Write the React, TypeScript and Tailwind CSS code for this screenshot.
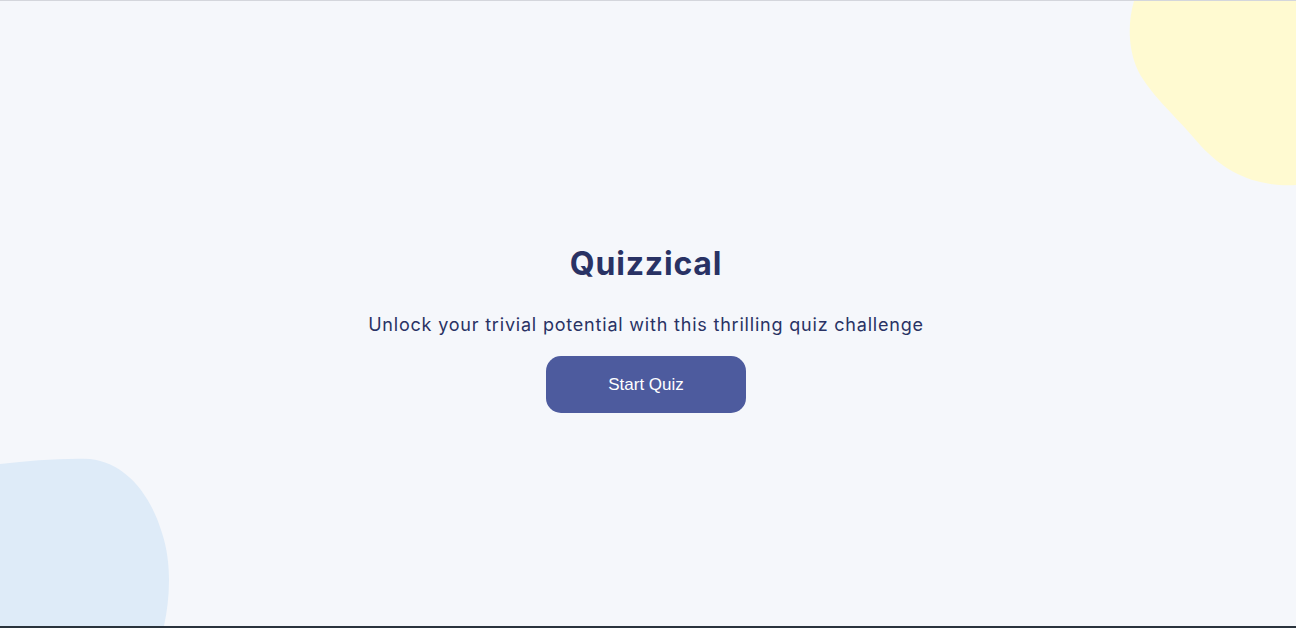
function YellowBlob() {
  return (
    <svg
      className="absolute top-0 right-0"
      width="170"
      height="190"
      viewBox="0 0 170 190"
      aria-hidden="true"
    >
      <path
        d="M8,0 C2,20 2,45 10,65 C20,90 50,115 75,145 C100,172 130,186 170,184 L170,0 Z"
        fill="#FFFAD1"
      />
    </svg>
  );
}

function BlueBlob() {
  return (
    <svg
      className="absolute left-0 bottom-0"
      width="175"
      height="188"
      viewBox="0 0 175 188"
      aria-hidden="true"
    >
      <path
        d="M0,26 L0,188 L164,188 C170,160 172,125 162,95 C150,55 125,25 90,21 C60,20 30,23 0,26 Z"
        fill="#DEEBF8"
      />
    </svg>
  );
}

export default function App() {
  return (
    <div className="h-[628px] w-full flex flex-col bg-[#F5F7FB]">
      <div className="h-px bg-[#d4d6dc]" />
      <main className="relative flex-1 overflow-hidden flex flex-col items-center pt-[244px] pr-[4px]">
        <YellowBlob />
        <BlueBlob />
        <h1 className="relative text-[32px] leading-[38px] font-bold tracking-[0.8px] text-[#293264] font-['Inter',sans-serif]">
          Quizzical
        </h1>
        <p className="relative mt-[31px] text-[18px] leading-[22px] tracking-[0.8px] text-[#293264] font-['Inter',sans-serif]">
          Unlock your trivial potential with this thrilling quiz challenge
        </p>
        <button className="relative mt-[20px] w-[200px] h-[57px] rounded-[15px] bg-[#4D5B9E] text-white text-[17px] font-['Liberation_Sans',Arial,sans-serif]">
          Start Quiz
        </button>
      </main>
      <div className="h-[2px] bg-[#2a333d]" />
    </div>
  );
}
